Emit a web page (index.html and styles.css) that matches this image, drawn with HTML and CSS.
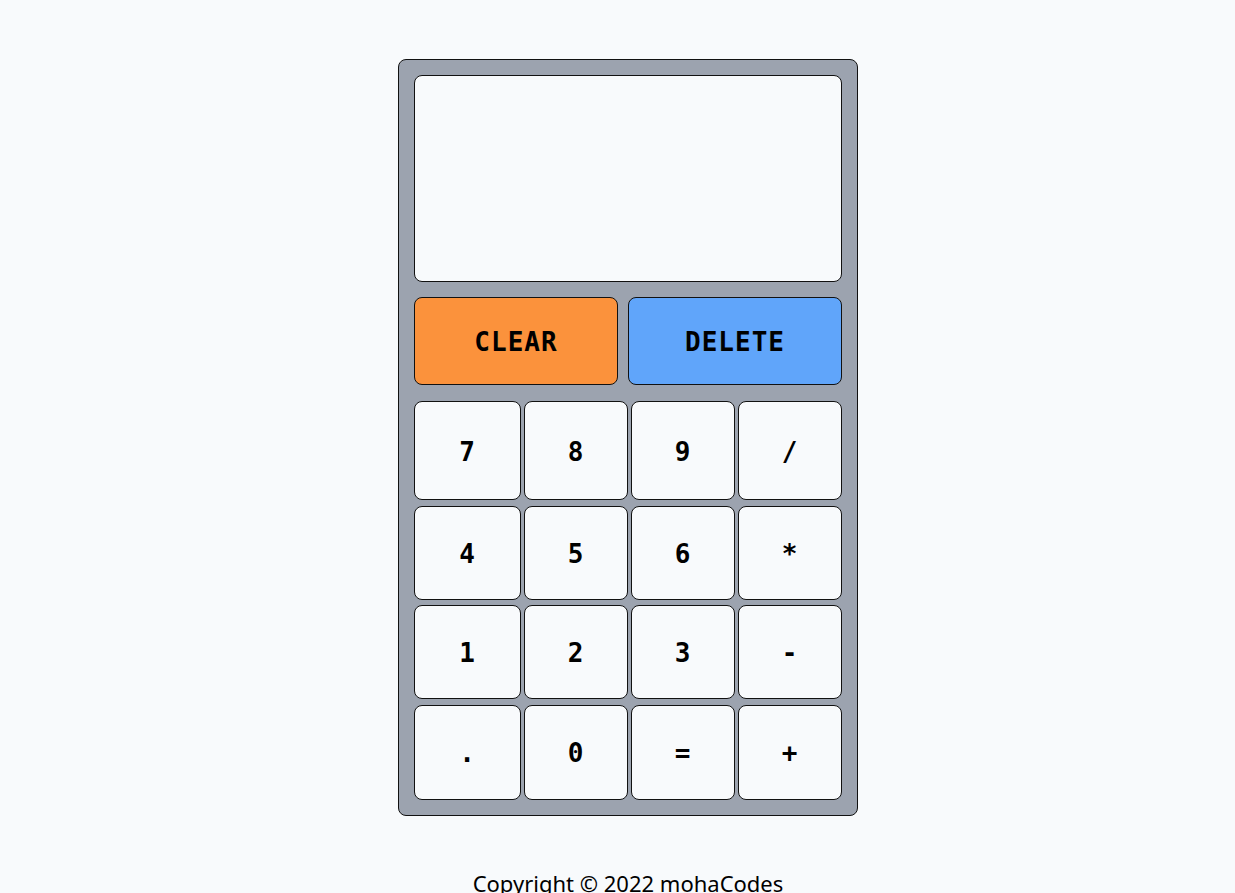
FILE: index.html
```html
<!DOCTYPE html>
<html lang="en">
<head>
<meta charset="utf-8">
<title>Calculator</title>
<link rel="stylesheet" href="styles.css">
</head>
<body>
<main class="page">
  <div class="calculator">
    <div class="display"></div>
    <div class="actions">
      <button class="btn btn-clear">CLEAR</button>
      <button class="btn btn-delete">DELETE</button>
    </div>
    <div class="keypad">
      <button class="btn key">7</button>
      <button class="btn key">8</button>
      <button class="btn key">9</button>
      <button class="btn key">/</button>
      <button class="btn key">4</button>
      <button class="btn key">5</button>
      <button class="btn key">6</button>
      <button class="btn key">*</button>
      <button class="btn key">1</button>
      <button class="btn key">2</button>
      <button class="btn key">3</button>
      <button class="btn key">-</button>
      <button class="btn key">.</button>
      <button class="btn key">0</button>
      <button class="btn key">=</button>
      <button class="btn key">+</button>
    </div>
  </div>
  <footer class="footer">Copyright © 2022 mohaCodes</footer>
</main>
</body>
</html>
```
FILE: styles.css
```css
html, body {
  margin: 0;
  padding: 0;
  overflow: hidden;
  background: #f8fafc;
}

.page {
  display: flex;
  flex-direction: column;
  align-items: center;
  padding-top: 59px;
  padding-left: 21px;
  font-family: "DejaVu Sans Mono", "Liberation Mono", monospace;
}

.calculator {
  width: 428px;
  padding: 15px;
  background: #9ca3af;
  border: 1px solid #111;
  border-radius: 8px;
  display: flex;
  flex-direction: column;
}

.display {
  height: 205px;
  background: #f8fafc;
  border: 1px solid #111;
  border-radius: 8px;
}

.actions {
  margin-top: 15px;
  display: grid;
  grid-template-columns: 204px 214px;
  column-gap: 10px;
  height: 88px;
}

.btn {
  margin: 0;
  padding: 2px 0 0;
  border: 1px solid #111;
  border-radius: 8px;
  font-family: "DejaVu Sans Mono", "Liberation Mono", monospace;
  font-weight: bold;
  font-size: 26px;
  letter-spacing: 1px;
  color: #000;
  display: flex;
  align-items: center;
  justify-content: center;
  cursor: pointer;
}

.btn-clear {
  background: #fb923c;
}

.btn-delete {
  background: #60a5fa;
}

.keypad {
  margin-top: 16px;
  display: grid;
  grid-template-columns: 107px 104px 104px 104px;
  grid-template-rows: 99px 94px 94px 95px;
  column-gap: 3px;
  row-gap: 5.667px;
}

.key {
  background: #f8fafc;
}

.footer {
  margin-top: 53px;
  font-family: "Noto Sans", "Open Sans", sans-serif;
  font-size: 22px;
  line-height: 28px;
  color: #000;
}
```
